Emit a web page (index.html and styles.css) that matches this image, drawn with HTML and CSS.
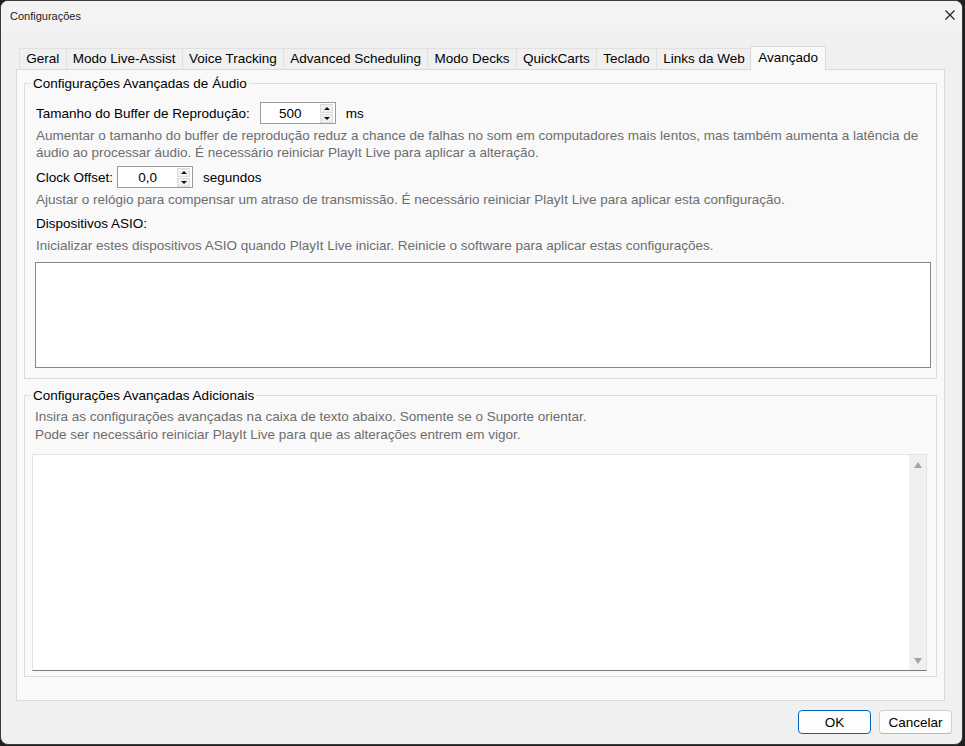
FILE: index.html
```html
<!DOCTYPE html>
<html lang="pt">
<head>
    <meta charset="UTF-8">
    <title>Configurações</title>
    <link rel="stylesheet" href="styles.css">
</head>
<body>
<div class="window">
    <div class="titlebar">
        <span class="title">Configurações</span>
        <span class="close">
            <svg width="10" height="10" viewBox="0 0 10 10"><path d="M0.5 0.5 L9.5 9.5 M9.5 0.5 L0.5 9.5" stroke="#1b1b1b" stroke-width="1.1" fill="none"/></svg>
        </span>
    </div>
    <div class="content">
        <div class="tabs">
            <div class="tab">Geral</div>
            <div class="tab">Modo Live-Assist</div>
            <div class="tab">Voice Tracking</div>
            <div class="tab">Advanced Scheduling</div>
            <div class="tab">Modo Decks</div>
            <div class="tab">QuickCarts</div>
            <div class="tab">Teclado</div>
            <div class="tab">Links da Web</div>
            <div class="tab active">Avançado</div>
        </div>
        <div class="panel">
            <fieldset class="group audio">
                <legend>Configurações Avançadas de Áudio</legend>
                <div class="field-row buffer">
                    <label>Tamanho do Buffer de Reprodução:</label>
                    <div class="spin">
                        <span class="spin-value">500</span>
                        <span class="spin-btns"><span class="up"></span><span class="down"></span></span>
                    </div>
                    <span class="unit">ms</span>
                </div>
                <p class="help">Aumentar o tamanho do buffer de reprodução reduz a chance de falhas no som em computadores mais lentos, mas também aumenta a latência de<br>áudio ao processar áudio. É necessário reiniciar PlayIt Live para aplicar a alteração.</p>
                <div class="field-row clock">
                    <label>Clock Offset:</label>
                    <div class="spin">
                        <span class="spin-value">0,0</span>
                        <span class="spin-btns"><span class="up"></span><span class="down"></span></span>
                    </div>
                    <span class="unit">segundos</span>
                </div>
                <p class="help">Ajustar o relógio para compensar um atraso de transmissão. É necessário reiniciar PlayIt Live para aplicar esta configuração.</p>
                <div class="label-line">Dispositivos ASIO:</div>
                <p class="help asio-help">Inicializar estes dispositivos ASIO quando PlayIt Live iniciar. Reinicie o software para aplicar estas configurações.</p>
                <div class="listbox"></div>
            </fieldset>

            <fieldset class="group extra">
                <legend>Configurações Avançadas Adicionais</legend>
                <p class="help intro">Insira as configurações avançadas na caixa de texto abaixo. Somente se o Suporte orientar.<br>Pode ser necessário reiniciar PlayIt Live para que as alterações entrem em vigor.</p>
                <div class="textbox">
                    <div class="textbox-area"></div>
                    <div class="scrollbar">
                        <span class="arrow-up"></span>
                        <span class="arrow-down"></span>
                    </div>
                </div>
            </fieldset>
        </div>
        <div class="buttons">
            <button class="btn primary">OK</button>
            <button class="btn">Cancelar</button>
        </div>
    </div>
</div>
</body>
</html>
```

FILE: styles.css
```css
html {
    background: #1f1f1f;
}
body {
    margin: 0;
    font-family: "Liberation Sans", Arial, sans-serif;
    font-size: 13.5px;
    color: #000;
}
.window {
    width: 963px;
    height: 745px;
    box-sizing: border-box;
    border: 1px solid #3a3a3a;
    border-radius: 8px;
    background: #f0f0f0;
    overflow: hidden;
}
.titlebar {
    height: 30px;
    display: flex;
    align-items: center;
    justify-content: space-between;
    background: #f3f3f3;
    padding: 0 7px 0 9px;
}
.title {
    font-size: 11px;
    color: #1a1a1a;
    margin-top: -1px;
}
.close {
    display: flex;
    margin-top: -3px;
}
.content {
    padding: 15px 10px 0 15px;
}

/* tabs */
.tabs {
    display: flex;
    align-items: flex-end;
    height: 23px;
    margin-left: 4px;
    position: relative;
    z-index: 1;
}
.tab {
    height: 20px;
    line-height: 20px;
    padding: 0 6.25px;
    border: 1px solid #e1e1e1;
    border-bottom: none;
    margin-left: -1px;
    background: #f0f0f0;
    white-space: nowrap;
}
.tab.active {
    height: 23px;
    line-height: 22px;
    background: #f9f9f9;
    border-color: #d9d9d9;
    margin: 0 -2px -1px -2px;
    padding: 0 7px;
    position: relative;
}

/* panel */
.panel {
    background: #f9f9f9;
    border: 1px solid #dadada;
    padding: 5px 7px 23px 7px;
    margin-right: 7px;
}
.group {
    margin: 0;
    min-width: 0;
    border: 1px solid #dcdcdc;
    padding: 0 5px 10px 10px;
}
.group legend {
    padding: 0 2px;
    margin-left: -4px;
    line-height: 17px;
}
.group.extra {
    margin-top: 8px;
    padding: 0 9px 5px 7px;
}
.group.extra legend {
    margin-left: -1px;
}
.field-row {
    display: flex;
    align-items: center;
    margin-top: 5px;
}
.field-row label {
    padding-left: 1px;
}
.field-row.buffer {
    margin-top: 10px;
}
.buffer label {
    margin-right: 10px;
}
.clock label {
    margin-right: 4px;
}
.unit {
    margin-left: 10px;
}
.spin {
    width: 76px;
    height: 22px;
    box-sizing: border-box;
    border: 1px solid #9c9c9c;
    background: #fff;
    display: flex;
    align-items: center;
    padding-right: 2px;
}
.spin-value {
    flex: 1;
    text-align: center;
}
.spin-btns {
    display: flex;
    flex-direction: column;
    gap: 1px;
    width: 13px;
}
.spin-btns span {
    background: #f0f0f0;
    border: 1px solid #dcdcdc;
    position: relative;
    height: 7px;
}
.spin-btns span::after {
    content: "";
    position: absolute;
    left: 3px;
    border-left: 3px solid transparent;
    border-right: 3px solid transparent;
}
.spin-btns .up::after {
    top: 2px;
    border-bottom: 3px solid #111;
}
.spin-btns .down::after {
    top: 2px;
    border-top: 3px solid #111;
}
.help {
    margin: 3px 0 0 0;
    line-height: 17px;
    color: #6d6d6d;
    white-space: nowrap;
    padding-left: 1px;
}
.label-line {
    margin-top: 7px;
    line-height: 17px;
    padding-left: 1px;
}
.help.asio-help {
    margin-top: 5px;
}
.listbox {
    margin-top: 8px;
    height: 106px;
    box-sizing: border-box;
    border: 1px solid #84888f;
    background: #fff;
}
.help.intro {
    margin-top: 4px;
    line-height: 18px;
    padding-left: 3px;
}
.textbox {
    margin-top: 10px;
    height: 217px;
    box-sizing: border-box;
    border: 1px solid #e3e3e3;
    border-bottom-color: #7a7a7a;
    background: #fff;
    display: flex;
}
.textbox-area {
    flex: 1;
}
.scrollbar {
    width: 17px;
    background: #f0f0f0;
    display: flex;
    flex-direction: column;
    justify-content: space-between;
    align-items: center;
    padding: 7px 0 6px;
}
.arrow-up {
    border-left: 4px solid transparent;
    border-right: 4px solid transparent;
    border-bottom: 6px solid #a3a3a3;
}
.arrow-down {
    border-left: 4px solid transparent;
    border-right: 4px solid transparent;
    border-top: 6px solid #a3a3a3;
}

/* dialog buttons */
.buttons {
    display: flex;
    justify-content: flex-end;
    gap: 8px;
    margin-top: 9px;
}
.btn {
    width: 73px;
    height: 24px;
    font-family: "Liberation Sans", Arial, sans-serif;
    font-size: 13.5px;
    color: #000;
    background: #fdfdfd;
    border: 1px solid #d0d0d0;
    border-bottom-color: #b9b9b9;
    border-radius: 4px;
    padding: 0;
}
.btn.primary {
    border: 1px solid #0067c0;
}
```
